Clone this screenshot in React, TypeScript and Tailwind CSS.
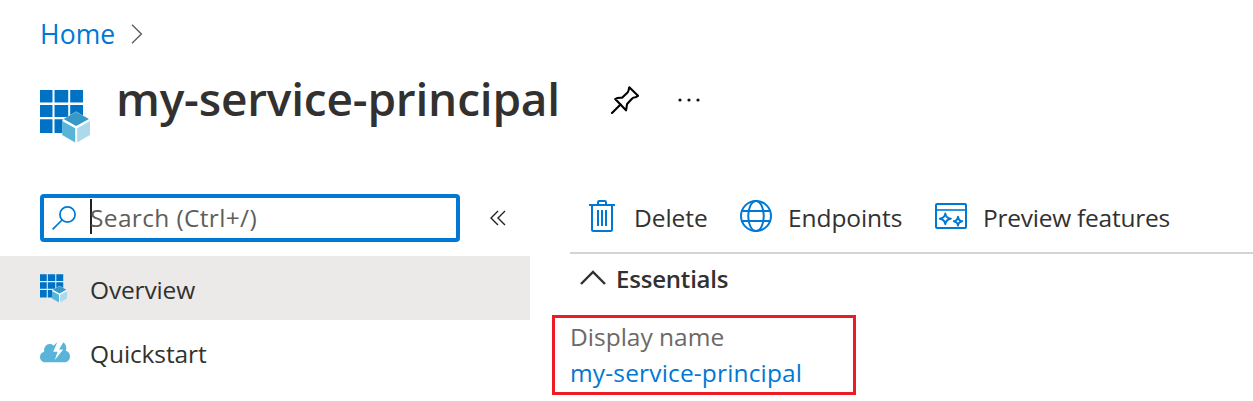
import React from 'react';

type IconProps = { className?: string };

function AppGridIcon({ className }: IconProps) {
  return (
    <svg viewBox="0 0 50 53" className={className}>
      <g fill="#0072c6">
        <path d="M0 0h12.5v12.5H0zM14.5 0h13.7v12.5H14.5zM30.2 0H43v12.5H30.2z" />
        <path d="M0 15h12.5v12H0zM14.5 15h13.7v12H14.5zM30.2 15H43v12H30.2z" />
        <path d="M0 29.2h12.5V43H0zM14.5 29.2h13.7V43H14.5z" />
      </g>
      <path d="M36.2 21.5 50 29.8v14.4l-13.8 8.3-13.8-8.3V29.8z" fill="#fff" />
      <path d="M36.2 21.8 49 28.9l-12.8 7-12.6-7z" fill="#3999c6" />
      <path d="M22.2 31 35.2 38.2V52.4L22.2 45z" fill="#59b4d9" />
      <path d="M50 31 37.2 38.2V52.4L50 45z" fill="#acdaec" />
    </svg>
  );
}

function CloudIcon({ className }: IconProps) {
  return (
    <svg viewBox="0 0 30 22" className={className}>
      <path
        d="M5.5 21.3C2.3 21.3 0 19 0 15.9c0-2.700 1.700-4.600 4.100-5.200C3.700 6.300 6.200 3.100 9.800 3.100c1.600 0 3 .6 4.100 1.600C15.500 2 18.200.6 21 .8c3 .2 5 2.700 5.200 5.700.1 1 0 2.200-.3 3.200 2.500.6 4.100 2.800 4.100 5.600 0 3.500-2.300 6-5.600 6z"
        fill="#59b4d9"
      />
      <path d="M17.700.3 13.200 10.800h4.300l-2.700 8.100 8.400-10.500h-4.100L23.900.3z" fill="#fff" />
    </svg>
  );
}

function PinIcon({ className }: IconProps) {
  return (
    <svg viewBox="0 0 28 28" className={className} fill="none" stroke="#000" strokeWidth="2.100" strokeLinejoin="round" strokeLinecap="round">
      <path d="M18.300 1.200 27 9.800l-2.600 1.500c-1.600 0-2.600.5-3.700 1.700l-4.600 5c-.7 2.200-.3 4.100-1.100 6.300L4.200 13c2.200-1.500 4.500-1.300 6.900-1.200l5.700-5.600c.9-1.400.9-2.800 1.500-5z" />
      <path d="M9.500 18.500 1 27" />
    </svg>
  );
}

function TrashIcon({ className }: IconProps) {
  return (
    <svg viewBox="0 0 26 32" className={className} fill="none" stroke="#0078d4" strokeWidth="2">
      <path d="M0 5h26M9 5V2.200Q9 1 10.200 1h5.600Q17 1 17 2.200V5" />
      <path d="M3 5v24.500Q3 31 4.500 31h17q1.500 0 1.500-1.500V5" />
      <path d="M9 10v16M13 10v16M17 10v16" />
    </svg>
  );
}

function GlobeIcon({ className }: IconProps) {
  return (
    <svg viewBox="0 0 32 32" className={className} fill="none" stroke="#0078d4" strokeWidth="2">
      <circle cx="16" cy="16" r="15" />
      <ellipse cx="16" cy="16" rx="7.800" ry="15" />
      <path d="M2 11h28M2 21h28" />
    </svg>
  );
}

function PreviewIcon({ className }: IconProps) {
  return (
    <svg viewBox="0 0 32 26" className={className} fill="none" stroke="#0078d4" strokeWidth="2" strokeLinejoin="round">
      <rect x="1" y="1" width="30" height="24" rx="1" />
      <path d="M1 7h30" strokeWidth="1.600" />
      <path d="M10.300 10.600Q11 15 15.800 15.700 11 16.500 10.300 21 9.600 16.500 4.800 15.700 9.600 15 10.300 10.600z" />
      <path d="M23 13.800Q23.500 17.600 27.200 18.200 23.500 18.800 23 22.500 22.500 18.800 18.800 18.200 22.500 17.600 23 13.800z" />
    </svg>
  );
}

function SearchIcon({ className }: IconProps) {
  return (
    <svg viewBox="0 0 24 24" className={className} fill="none" stroke="#0078d4" strokeWidth="1.700">
      <circle cx="15.500" cy="8.500" r="7.600" />
      <path d="M10 14 .6 23.400" />
    </svg>
  );
}

function CommandBar() {
  return (
    <div className="flex h-[60px] items-start border-b-2 border-[#d4d4d4] text-[24.5px]">
      <div className="flex h-12 w-[170px] items-center pl-[19px]">
        <TrashIcon className="mt-[-4px] mr-[19px] h-8 w-[26px] shrink-0" />
        <span className="mt-px tracking-[-0.05px] whitespace-nowrap">Delete</span>
      </div>
      <div className="flex h-12 w-[195px] items-center">
        <GlobeIcon className="mt-[-4px] mr-4 size-8 shrink-0" />
        <span className="mt-px tracking-[-0.08px] whitespace-nowrap">Endpoints</span>
      </div>
      <div className="flex h-12 items-center">
        <PreviewIcon className="mt-[-4px] mr-4 h-[26px] w-8 shrink-0" />
        <span className="mt-px tracking-[-0.25px] whitespace-nowrap">Preview features</span>
      </div>
    </div>
  );
}

export default function App() {
  return (
    <div className="h-[401px] w-[1253px] overflow-hidden bg-white font-['Open_Sans',sans-serif] text-[#323130]">
      <nav className="flex h-[67px] items-center pl-10">
        <a className="mt-0.5 text-[26.5px] tracking-[0.1px] text-[#0078d4]">Home</a>
        <svg viewBox="0 0 12 20" className="ml-4 h-5 w-3" fill="none" stroke="#605e5c" strokeWidth="1.400">
          <path d="M1 .8 10.400 10 1 19.200" />
        </svg>
      </nav>

      <header className="flex h-[127px] items-start pl-10">
        <AppGridIcon className="mt-[23px] h-[53px] w-[50px] shrink-0" />
        <h1 className="ml-[26px] w-[495px] text-[46px] leading-[62px] font-semibold tracking-[-0.2px] whitespace-nowrap">
          my-service-principal
        </h1>
        <PinIcon className="mt-[19px] size-7 shrink-0" />
        <svg viewBox="0 0 24 4" className="mt-[31px] ml-[38px] h-1 w-6" fill="#111">
          <circle cx="3" cy="2" r="1.600" />
          <circle cx="12" cy="2" r="1.600" />
          <circle cx="21" cy="2" r="1.600" />
        </svg>
      </header>

      <div className="flex">
        <aside className="w-[530px] shrink-0 text-[24.5px]">
          <div className="flex h-[62px] items-start pl-10">
            <div className="flex h-12 w-[420px] items-center rounded-[4px] border-4 border-[#0078d4] pl-2">
              <SearchIcon className="mr-[14px] size-6 shrink-0" />
              <span className="mb-[3px] h-[35px] w-0.5 shrink-0 bg-[#222]" />
              <span className="mt-px -ml-0.5 tracking-[0.35px] text-[#605e5c]">Search (Ctrl+/)</span>
            </div>
            <svg viewBox="0 0 16 16" className="mt-4 ml-[30px] size-4" fill="none" stroke="#222" strokeWidth="1.400">
              <path d="M8 1 1 8l7 7M15 1 8 8l7 7" />
            </svg>
          </div>
          <div className="flex h-16 items-center bg-[#ebeae8] pl-10">
            <AppGridIcon className="mr-[23px] h-[29px] w-[27px]" />
            <span className="mt-1 tracking-[-0.15px]">Overview</span>
          </div>
          <div className="flex h-16 items-center pl-10">
            <CloudIcon className="mr-5 h-[22px] w-[30px]" />
            <span className="mt-1 tracking-[-0.1px]">Quickstart</span>
          </div>
        </aside>

        <main className="ml-[22px] flex-1">
          <div className="pl-[18px]">
            <CommandBar />
          </div>
          <div className="flex h-[61px] items-start pl-[28px]">
            <svg viewBox="0 0 26 15" className="mt-4 h-[15px] w-[26px]" fill="none" stroke="#323130" strokeWidth="2.400">
              <path d="M1 14 13 2l12 12" />
            </svg>
            <h2 className="ml-[10px] text-[24px] leading-[49px] font-semibold tracking-[-0.2px]">Essentials</h2>
          </div>
          <section className="h-20 w-[304px] border-[3px] border-[#ed1c24] pt-px pl-[15px] text-[24.5px] leading-9">
            <div className="tracking-[0px] text-[#6b6967]">Display name</div>
            <a className="block tracking-[0.16px] text-[#0078d4]">my-service-principal</a>
          </section>
        </main>
      </div>
    </div>
  );
}
